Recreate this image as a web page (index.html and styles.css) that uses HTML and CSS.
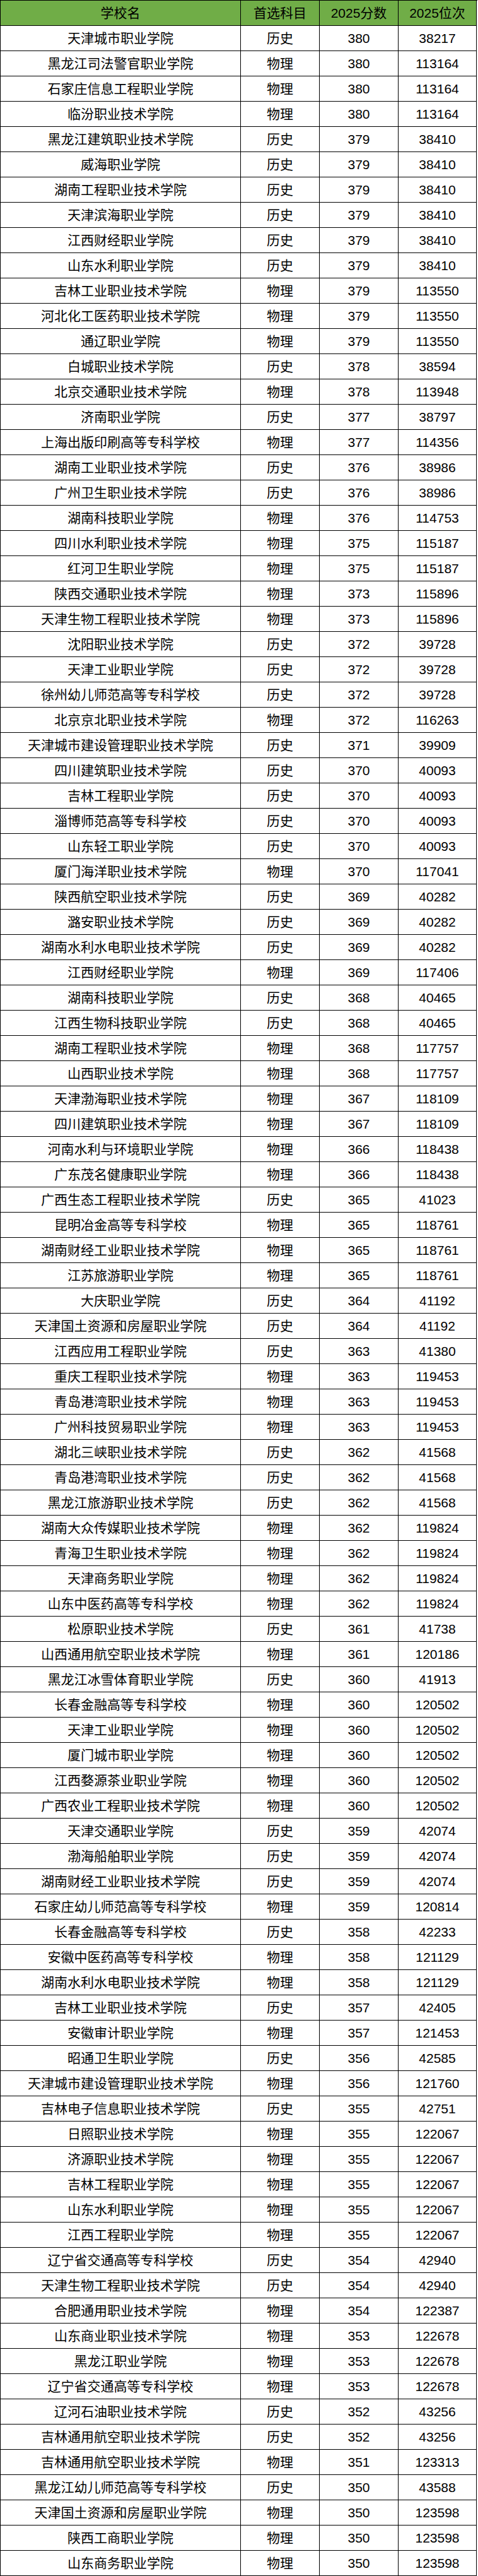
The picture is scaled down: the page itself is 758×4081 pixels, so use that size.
FILE: index.html
```html
<!DOCTYPE html>
<html lang="zh-CN">
<head>
<meta charset="utf-8">
<title>2025分数位次</title>
<link rel="stylesheet" href="styles.css">
</head>
<body>
<div class="sheet">
<div class="row head"><div class="c">学校名</div><div class="c">首选科目</div><div class="c">2025分数</div><div class="c">2025位次</div></div>
<div class="row"><div class="c">天津城市职业学院</div><div class="c">历史</div><div class="c">380</div><div class="c">38217</div></div>
<div class="row"><div class="c">黑龙江司法警官职业学院</div><div class="c">物理</div><div class="c">380</div><div class="c">113164</div></div>
<div class="row"><div class="c">石家庄信息工程职业学院</div><div class="c">物理</div><div class="c">380</div><div class="c">113164</div></div>
<div class="row"><div class="c">临汾职业技术学院</div><div class="c">物理</div><div class="c">380</div><div class="c">113164</div></div>
<div class="row"><div class="c">黑龙江建筑职业技术学院</div><div class="c">历史</div><div class="c">379</div><div class="c">38410</div></div>
<div class="row"><div class="c">威海职业学院</div><div class="c">历史</div><div class="c">379</div><div class="c">38410</div></div>
<div class="row"><div class="c">湖南工程职业技术学院</div><div class="c">历史</div><div class="c">379</div><div class="c">38410</div></div>
<div class="row"><div class="c">天津滨海职业学院</div><div class="c">历史</div><div class="c">379</div><div class="c">38410</div></div>
<div class="row"><div class="c">江西财经职业学院</div><div class="c">历史</div><div class="c">379</div><div class="c">38410</div></div>
<div class="row"><div class="c">山东水利职业学院</div><div class="c">历史</div><div class="c">379</div><div class="c">38410</div></div>
<div class="row"><div class="c">吉林工业职业技术学院</div><div class="c">物理</div><div class="c">379</div><div class="c">113550</div></div>
<div class="row"><div class="c">河北化工医药职业技术学院</div><div class="c">物理</div><div class="c">379</div><div class="c">113550</div></div>
<div class="row"><div class="c">通辽职业学院</div><div class="c">物理</div><div class="c">379</div><div class="c">113550</div></div>
<div class="row"><div class="c">白城职业技术学院</div><div class="c">历史</div><div class="c">378</div><div class="c">38594</div></div>
<div class="row"><div class="c">北京交通职业技术学院</div><div class="c">物理</div><div class="c">378</div><div class="c">113948</div></div>
<div class="row"><div class="c">济南职业学院</div><div class="c">历史</div><div class="c">377</div><div class="c">38797</div></div>
<div class="row"><div class="c">上海出版印刷高等专科学校</div><div class="c">物理</div><div class="c">377</div><div class="c">114356</div></div>
<div class="row"><div class="c">湖南工业职业技术学院</div><div class="c">历史</div><div class="c">376</div><div class="c">38986</div></div>
<div class="row"><div class="c">广州卫生职业技术学院</div><div class="c">历史</div><div class="c">376</div><div class="c">38986</div></div>
<div class="row"><div class="c">湖南科技职业学院</div><div class="c">物理</div><div class="c">376</div><div class="c">114753</div></div>
<div class="row"><div class="c">四川水利职业技术学院</div><div class="c">物理</div><div class="c">375</div><div class="c">115187</div></div>
<div class="row"><div class="c">红河卫生职业学院</div><div class="c">物理</div><div class="c">375</div><div class="c">115187</div></div>
<div class="row"><div class="c">陕西交通职业技术学院</div><div class="c">物理</div><div class="c">373</div><div class="c">115896</div></div>
<div class="row"><div class="c">天津生物工程职业技术学院</div><div class="c">物理</div><div class="c">373</div><div class="c">115896</div></div>
<div class="row"><div class="c">沈阳职业技术学院</div><div class="c">历史</div><div class="c">372</div><div class="c">39728</div></div>
<div class="row"><div class="c">天津工业职业学院</div><div class="c">历史</div><div class="c">372</div><div class="c">39728</div></div>
<div class="row"><div class="c">徐州幼儿师范高等专科学校</div><div class="c">历史</div><div class="c">372</div><div class="c">39728</div></div>
<div class="row"><div class="c">北京京北职业技术学院</div><div class="c">物理</div><div class="c">372</div><div class="c">116263</div></div>
<div class="row"><div class="c">天津城市建设管理职业技术学院</div><div class="c">历史</div><div class="c">371</div><div class="c">39909</div></div>
<div class="row"><div class="c">四川建筑职业技术学院</div><div class="c">历史</div><div class="c">370</div><div class="c">40093</div></div>
<div class="row"><div class="c">吉林工程职业学院</div><div class="c">历史</div><div class="c">370</div><div class="c">40093</div></div>
<div class="row"><div class="c">淄博师范高等专科学校</div><div class="c">历史</div><div class="c">370</div><div class="c">40093</div></div>
<div class="row"><div class="c">山东轻工职业学院</div><div class="c">历史</div><div class="c">370</div><div class="c">40093</div></div>
<div class="row"><div class="c">厦门海洋职业技术学院</div><div class="c">物理</div><div class="c">370</div><div class="c">117041</div></div>
<div class="row"><div class="c">陕西航空职业技术学院</div><div class="c">历史</div><div class="c">369</div><div class="c">40282</div></div>
<div class="row"><div class="c">潞安职业技术学院</div><div class="c">历史</div><div class="c">369</div><div class="c">40282</div></div>
<div class="row"><div class="c">湖南水利水电职业技术学院</div><div class="c">历史</div><div class="c">369</div><div class="c">40282</div></div>
<div class="row"><div class="c">江西财经职业学院</div><div class="c">物理</div><div class="c">369</div><div class="c">117406</div></div>
<div class="row"><div class="c">湖南科技职业学院</div><div class="c">历史</div><div class="c">368</div><div class="c">40465</div></div>
<div class="row"><div class="c">江西生物科技职业学院</div><div class="c">历史</div><div class="c">368</div><div class="c">40465</div></div>
<div class="row"><div class="c">湖南工程职业技术学院</div><div class="c">物理</div><div class="c">368</div><div class="c">117757</div></div>
<div class="row"><div class="c">山西职业技术学院</div><div class="c">物理</div><div class="c">368</div><div class="c">117757</div></div>
<div class="row"><div class="c">天津渤海职业技术学院</div><div class="c">物理</div><div class="c">367</div><div class="c">118109</div></div>
<div class="row"><div class="c">四川建筑职业技术学院</div><div class="c">物理</div><div class="c">367</div><div class="c">118109</div></div>
<div class="row"><div class="c">河南水利与环境职业学院</div><div class="c">物理</div><div class="c">366</div><div class="c">118438</div></div>
<div class="row"><div class="c">广东茂名健康职业学院</div><div class="c">物理</div><div class="c">366</div><div class="c">118438</div></div>
<div class="row"><div class="c">广西生态工程职业技术学院</div><div class="c">历史</div><div class="c">365</div><div class="c">41023</div></div>
<div class="row"><div class="c">昆明冶金高等专科学校</div><div class="c">物理</div><div class="c">365</div><div class="c">118761</div></div>
<div class="row"><div class="c">湖南财经工业职业技术学院</div><div class="c">物理</div><div class="c">365</div><div class="c">118761</div></div>
<div class="row"><div class="c">江苏旅游职业学院</div><div class="c">物理</div><div class="c">365</div><div class="c">118761</div></div>
<div class="row"><div class="c">大庆职业学院</div><div class="c">历史</div><div class="c">364</div><div class="c">41192</div></div>
<div class="row"><div class="c">天津国土资源和房屋职业学院</div><div class="c">历史</div><div class="c">364</div><div class="c">41192</div></div>
<div class="row"><div class="c">江西应用工程职业学院</div><div class="c">历史</div><div class="c">363</div><div class="c">41380</div></div>
<div class="row"><div class="c">重庆工程职业技术学院</div><div class="c">物理</div><div class="c">363</div><div class="c">119453</div></div>
<div class="row"><div class="c">青岛港湾职业技术学院</div><div class="c">物理</div><div class="c">363</div><div class="c">119453</div></div>
<div class="row"><div class="c">广州科技贸易职业学院</div><div class="c">物理</div><div class="c">363</div><div class="c">119453</div></div>
<div class="row"><div class="c">湖北三峡职业技术学院</div><div class="c">历史</div><div class="c">362</div><div class="c">41568</div></div>
<div class="row"><div class="c">青岛港湾职业技术学院</div><div class="c">历史</div><div class="c">362</div><div class="c">41568</div></div>
<div class="row"><div class="c">黑龙江旅游职业技术学院</div><div class="c">历史</div><div class="c">362</div><div class="c">41568</div></div>
<div class="row"><div class="c">湖南大众传媒职业技术学院</div><div class="c">物理</div><div class="c">362</div><div class="c">119824</div></div>
<div class="row"><div class="c">青海卫生职业技术学院</div><div class="c">物理</div><div class="c">362</div><div class="c">119824</div></div>
<div class="row"><div class="c">天津商务职业学院</div><div class="c">物理</div><div class="c">362</div><div class="c">119824</div></div>
<div class="row"><div class="c">山东中医药高等专科学校</div><div class="c">物理</div><div class="c">362</div><div class="c">119824</div></div>
<div class="row"><div class="c">松原职业技术学院</div><div class="c">历史</div><div class="c">361</div><div class="c">41738</div></div>
<div class="row"><div class="c">山西通用航空职业技术学院</div><div class="c">物理</div><div class="c">361</div><div class="c">120186</div></div>
<div class="row"><div class="c">黑龙江冰雪体育职业学院</div><div class="c">历史</div><div class="c">360</div><div class="c">41913</div></div>
<div class="row"><div class="c">长春金融高等专科学校</div><div class="c">物理</div><div class="c">360</div><div class="c">120502</div></div>
<div class="row"><div class="c">天津工业职业学院</div><div class="c">物理</div><div class="c">360</div><div class="c">120502</div></div>
<div class="row"><div class="c">厦门城市职业学院</div><div class="c">物理</div><div class="c">360</div><div class="c">120502</div></div>
<div class="row"><div class="c">江西婺源茶业职业学院</div><div class="c">物理</div><div class="c">360</div><div class="c">120502</div></div>
<div class="row"><div class="c">广西农业工程职业技术学院</div><div class="c">物理</div><div class="c">360</div><div class="c">120502</div></div>
<div class="row"><div class="c">天津交通职业学院</div><div class="c">历史</div><div class="c">359</div><div class="c">42074</div></div>
<div class="row"><div class="c">渤海船舶职业学院</div><div class="c">历史</div><div class="c">359</div><div class="c">42074</div></div>
<div class="row"><div class="c">湖南财经工业职业技术学院</div><div class="c">历史</div><div class="c">359</div><div class="c">42074</div></div>
<div class="row"><div class="c">石家庄幼儿师范高等专科学校</div><div class="c">物理</div><div class="c">359</div><div class="c">120814</div></div>
<div class="row"><div class="c">长春金融高等专科学校</div><div class="c">历史</div><div class="c">358</div><div class="c">42233</div></div>
<div class="row"><div class="c">安徽中医药高等专科学校</div><div class="c">物理</div><div class="c">358</div><div class="c">121129</div></div>
<div class="row"><div class="c">湖南水利水电职业技术学院</div><div class="c">物理</div><div class="c">358</div><div class="c">121129</div></div>
<div class="row"><div class="c">吉林工业职业技术学院</div><div class="c">历史</div><div class="c">357</div><div class="c">42405</div></div>
<div class="row"><div class="c">安徽审计职业学院</div><div class="c">物理</div><div class="c">357</div><div class="c">121453</div></div>
<div class="row"><div class="c">昭通卫生职业学院</div><div class="c">历史</div><div class="c">356</div><div class="c">42585</div></div>
<div class="row"><div class="c">天津城市建设管理职业技术学院</div><div class="c">物理</div><div class="c">356</div><div class="c">121760</div></div>
<div class="row"><div class="c">吉林电子信息职业技术学院</div><div class="c">历史</div><div class="c">355</div><div class="c">42751</div></div>
<div class="row"><div class="c">日照职业技术学院</div><div class="c">物理</div><div class="c">355</div><div class="c">122067</div></div>
<div class="row"><div class="c">济源职业技术学院</div><div class="c">物理</div><div class="c">355</div><div class="c">122067</div></div>
<div class="row"><div class="c">吉林工程职业学院</div><div class="c">物理</div><div class="c">355</div><div class="c">122067</div></div>
<div class="row"><div class="c">山东水利职业学院</div><div class="c">物理</div><div class="c">355</div><div class="c">122067</div></div>
<div class="row"><div class="c">江西工程职业学院</div><div class="c">物理</div><div class="c">355</div><div class="c">122067</div></div>
<div class="row"><div class="c">辽宁省交通高等专科学校</div><div class="c">历史</div><div class="c">354</div><div class="c">42940</div></div>
<div class="row"><div class="c">天津生物工程职业技术学院</div><div class="c">历史</div><div class="c">354</div><div class="c">42940</div></div>
<div class="row"><div class="c">合肥通用职业技术学院</div><div class="c">物理</div><div class="c">354</div><div class="c">122387</div></div>
<div class="row"><div class="c">山东商业职业技术学院</div><div class="c">物理</div><div class="c">353</div><div class="c">122678</div></div>
<div class="row"><div class="c">黑龙江职业学院</div><div class="c">物理</div><div class="c">353</div><div class="c">122678</div></div>
<div class="row"><div class="c">辽宁省交通高等专科学校</div><div class="c">物理</div><div class="c">353</div><div class="c">122678</div></div>
<div class="row"><div class="c">辽河石油职业技术学院</div><div class="c">历史</div><div class="c">352</div><div class="c">43256</div></div>
<div class="row"><div class="c">吉林通用航空职业技术学院</div><div class="c">历史</div><div class="c">352</div><div class="c">43256</div></div>
<div class="row"><div class="c">吉林通用航空职业技术学院</div><div class="c">物理</div><div class="c">351</div><div class="c">123313</div></div>
<div class="row"><div class="c">黑龙江幼儿师范高等专科学校</div><div class="c">历史</div><div class="c">350</div><div class="c">43588</div></div>
<div class="row"><div class="c">天津国土资源和房屋职业学院</div><div class="c">物理</div><div class="c">350</div><div class="c">123598</div></div>
<div class="row"><div class="c">陕西工商职业学院</div><div class="c">物理</div><div class="c">350</div><div class="c">123598</div></div>
<div class="row"><div class="c">山东商务职业学院</div><div class="c">物理</div><div class="c">350</div><div class="c">123598</div></div>
</div>
</body>
</html>
```

FILE: styles.css
```css
html, body {
  margin: 0;
  padding: 0;
  background: #ffffff;
}

.sheet {
  width: 757px;
  box-sizing: border-box;
  border-left: 1px solid #000;
  border-top: 1px solid #000;
  font-family: "Liberation Sans", "Noto Sans CJK SC", sans-serif;
  font-size: 21px;
  color: #000;
}

.row {
  display: grid;
  grid-template-columns: 381px 125px 125px 124px;
}

.c {
  box-sizing: border-box;
  height: 40px;
  line-height: 39px;
  border-right: 1px solid #000;
  border-bottom: 1px solid #000;
  text-align: center;
  white-space: nowrap;
  overflow: hidden;
}

.head .c {
  background: #70ad47;
}
```
